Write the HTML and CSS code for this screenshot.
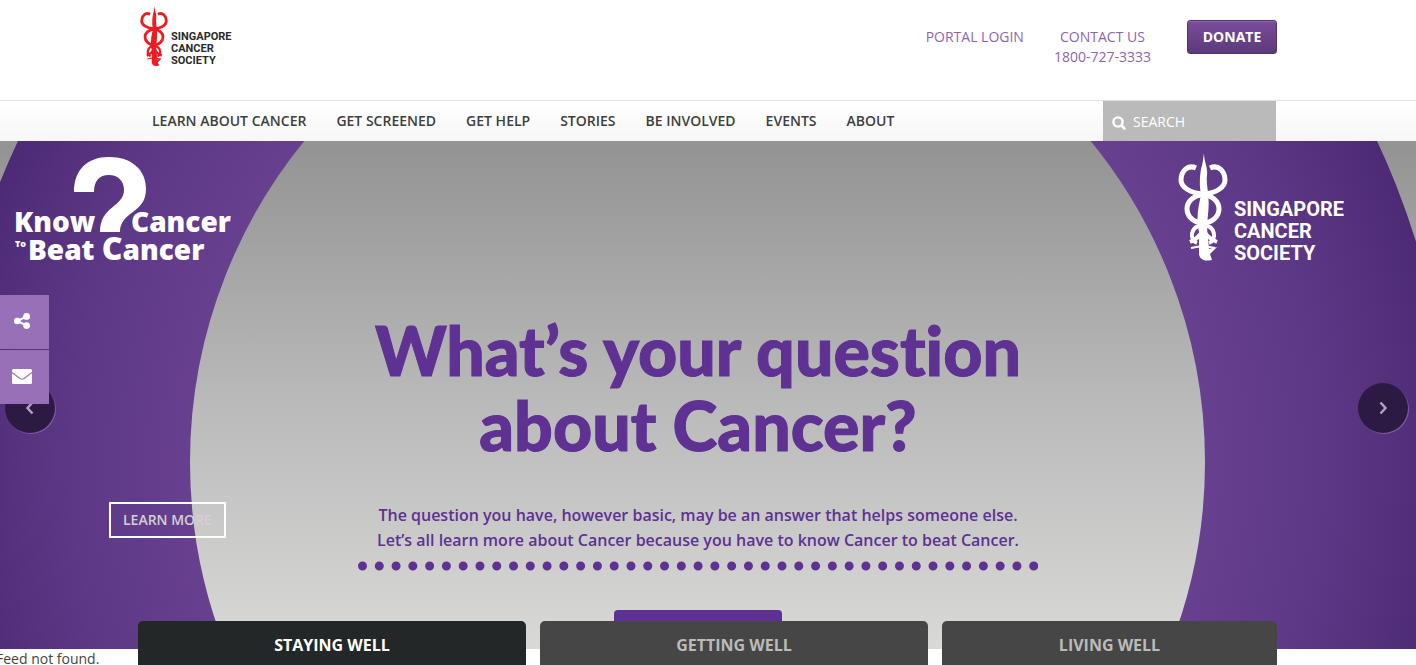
FILE: index.html
```
<!DOCTYPE html>
<html lang="en">
<head>
  <meta charset="utf-8">
  <title>Singapore Cancer Society</title>
  <link rel="stylesheet" href="styles.css">
</head>
<body>
  <svg width="0" height="0" class="symbols" aria-hidden="true">
    <symbol id="emblem" viewBox="0 0 50 110">
      <path d="M26 1C26 10 30 15 29 23C28 31 30 36 30 43C32 54 29 66 29 76L31 97L39 95L32 102L34 108C26 110 21 107 21 101V80C18 66 20 56 23 43C21 32 22 24 23 17C25 11 25 7 26 1Z" fill="currentColor"/>
      <g fill="none" stroke="currentColor" stroke-width="5">
        <path d="M18 16C9 12 3 20 3 28C3 35 12 41 25 42C39 41 47 35 47 28C47 20 41 12 32 16"/>
        <ellipse cx="25" cy="57" rx="16" ry="14"/>
        <path d="M19 91C11 88 12 74 25 73C38 74 39 88 31 91" stroke-width="4"/>
        <path d="M12 90C19 87 23 82 25 78C28 83 32 87 39 90" stroke-width="4"/>
        <path d="M13 96L24 94M37 96L26 94" stroke-width="2"/>
      </g>
    </symbol>
  </svg>

  <header class="header">
    <div class="container header-inner">
      <a href="#" class="logo">
        <svg class="logo-mark"><use href="#emblem"/></svg>
        <span>SINGAPORE<br>CANCER<br>SOCIETY</span>
      </a>
      <div class="header-links">
        <a href="#">PORTAL LOGIN</a>
        <a href="#" class="contact">CONTACT US<br>1800-727-3333</a>
        <button type="button" class="donate">DONATE</button>
      </div>
    </div>
  </header>

  <div class="navbar">
    <div class="container navbar-inner">
      <nav class="menu">
        <a href="#">LEARN ABOUT CANCER</a>
        <a href="#">GET SCREENED</a>
        <a href="#">GET HELP</a>
        <a href="#">STORIES</a>
        <a href="#">BE INVOLVED</a>
        <a href="#">EVENTS</a>
        <a href="#">ABOUT</a>
      </nav>
      <form class="search">
        <svg width="14" height="14" viewBox="0 0 14 14" aria-hidden="true">
          <circle cx="6" cy="6" r="4.6" fill="none" stroke="#fff" stroke-width="2.4"/>
          <path d="M9.5 9.5L12.5 12.5" stroke="#fff" stroke-width="2.6" stroke-linecap="round"/>
        </svg>
        <input type="text" placeholder="SEARCH" aria-label="Search">
      </form>
    </div>
  </div>

  <section class="hero">
    <svg class="hero-bg" viewBox="0 0 1416 508" preserveAspectRatio="xMidYMid slice" aria-hidden="true">
      <defs>
        <radialGradient id="ring" gradientUnits="userSpaceOnUse" cx="697.5" cy="321" r="752">
          <stop offset="0.67" stop-color="#67418f"/>
          <stop offset="0.83" stop-color="#5d3886"/>
          <stop offset="1" stop-color="#4d2a76"/>
        </radialGradient>
      </defs>
      <circle cx="697.5" cy="321" r="629.5" fill="none" stroke="url(#ring)" stroke-width="244"/>
    </svg>

    <svg class="campaign" viewBox="0 0 240 130" role="img" aria-label="Know Cancer To Beat Cancer">
      <path d="M74 51C74 29 87 16 109 16C132 16 146 29 146 48C146 73 120 70 120 91H100C100 65 124 66 124 49C124 40 118 34 109 34C99 34 94 40 94 51Z"/>
      <text x="14" y="91" class="word">Know</text>
      <text x="131" y="91" class="word">Cancer</text>
      <text x="15" y="106" class="word-small">To</text>
      <text x="28" y="119" class="word">Beat <tspan class="word-big">C</tspan>ancer</text>
    </svg>

    <div class="hero-logo">
      <svg class="hero-mark"><use href="#emblem"/></svg>
      <span>SINGAPORE<br>CANCER<br>SOCIETY</span>
    </div>

    <div class="banner">
      <h1>What’s your question<br>about Cancer?</h1>
      <p>The question you have, however basic, may be an answer that helps someone else.<br>Let’s all learn more about Cancer because you have to know Cancer to beat Cancer.</p>
      <svg class="dots" viewBox="0 0 680 10" aria-hidden="true">
        <path d="M4.500 5H692.500" pathLength="41" stroke-dasharray="0 1"/>
      </svg>
      <a href="#" class="ask" aria-label="Ask a question"></a>
    </div>

    <a href="#" class="learn-more">LEARN MORE</a>

    <button type="button" class="arrow arrow-prev" aria-label="Previous">
      <svg width="8" height="14" viewBox="0 0 8 14"><path d="M6.500 1.500L1.500 7L6.500 12.500"/></svg>
    </button>
    <button type="button" class="arrow arrow-next" aria-label="Next">
      <svg width="8" height="14" viewBox="0 0 8 14"><path d="M1.500 1.500L6.500 7L1.500 12.500"/></svg>
    </button>

    <div class="tabs">
      <button type="button" class="tab active">STAYING WELL</button>
      <button type="button" class="tab">GETTING WELL</button>
      <button type="button" class="tab tab-last">LIVING WELL</button>
    </div>
  </section>

  <div class="feed">Feed not found.</div>

  <div class="side-buttons">
    <button type="button" aria-label="Share">
      <svg width="16" height="16" viewBox="0 0 16 16">
        <circle cx="3.300" cy="8" r="3.300"/>
        <circle cx="12.600" cy="3.400" r="3.400"/>
        <circle cx="12.600" cy="12.600" r="3.400"/>
        <path d="M12.600 3.400L3.300 8L12.600 12.600" fill="none" stroke="#fff" stroke-width="2"/>
      </svg>
    </button>
    <button type="button" aria-label="Email">
      <svg width="20" height="16" viewBox="0 0 20 16">
        <rect y="1" width="20" height="15" rx="1.500"/>
        <path d="M0 4.500L8 10.400Q10 11.600 12 10.400L20 4.500" fill="none" stroke="#9870b8" stroke-width="1.200"/>
      </svg>
    </button>
  </div>
</body>
</html>
```
FILE: styles.css
```
body {
  margin: 0;
  font-family: 'Open Sans', sans-serif;
  font-size: 14px;
  line-height: 20px;
  color: #444;
  background-color: #fff;
  overflow: hidden;
}

a {
  text-decoration: none;
}

button {
  font-family: inherit;
  border: none;
  cursor: pointer;
}

.symbols {
  position: absolute;
}

.container {
  max-width: 1140px;
  margin: 0 auto;
}

/* Header */
.header {
  height: 100px;
  border-bottom: 1px solid #e2e2e2;
}

.header-inner {
  display: flex;
  justify-content: space-between;
  align-items: flex-start;
}

.logo {
  display: flex;
  align-items: flex-end;
  gap: 3px;
  padding: 5px 0 0 2px;
  font-family: Roboto, sans-serif;
  font-size: 11px;
  font-weight: 700;
  line-height: 12px;
  color: #2a2a2c;
}

.logo-mark {
  width: 28px;
  height: 62px;
  color: #ec1c24;
}

.header-links {
  display: flex;
  align-items: flex-start;
  padding-right: 1px;
}

.header-links a {
  margin-top: 27px;
  color: #9063b0;
  text-align: center;
}

.header-links .contact {
  margin-left: 30px;
  margin-right: 36px;
}

.donate {
  width: 90px;
  height: 34px;
  margin-top: 20px;
  padding: 0 0 2px;
  border: 1px solid #54346f;
  border-radius: 3px;
  background: linear-gradient(#7b4c9e, #5b3b78);
  box-shadow: inset 0 1px 0 #8f66ad;
  font-size: 14px;
  font-weight: 700;
  color: #fff;
}

/* Navigation */
.navbar {
  background: linear-gradient(#fff, #f7f7f7);
}

.navbar-inner {
  display: flex;
  justify-content: space-between;
}

.menu {
  display: flex;
  gap: 30px;
  padding-left: 14px;
}

.menu a {
  line-height: 40px;
  font-weight: 600;
  color: #3f3f3f;
}

.search {
  display: flex;
  align-items: center;
  gap: 7px;
  box-sizing: border-box;
  width: 173px;
  height: 40px;
  margin-right: 2px;
  padding: 4px 9px 0;
  background-color: #bababa;
}

.search input {
  flex: 1;
  min-width: 0;
  padding: 0 0 2px;
  border: none;
  background: none;
  font: inherit;
  color: #fff;
}

.search input::placeholder {
  color: #fff;
  opacity: 1;
}

/* Hero */
.hero {
  position: relative;
  background: linear-gradient(#939393, #bababa 52%, #d9d9d8);
}

.hero-bg {
  position: absolute;
  width: 100%;
  height: 100%;
}

.campaign {
  position: absolute;
  top: 0;
  left: 0;
  width: 240px;
  height: 130px;
  fill: #fff;
  font-family: 'Open Sans', sans-serif;
  font-weight: 800;
}

.word {
  font-size: 28px;
}

.word-big {
  font-size: 32px;
}

.word-small {
  font-size: 9px;
}

.hero-logo {
  position: absolute;
  top: 11px;
  right: 72px;
  display: flex;
  align-items: flex-end;
  gap: 6px;
  font-family: Roboto, sans-serif;
  font-size: 20px;
  font-weight: 700;
  line-height: 22px;
  color: #fff;
}

.hero-mark {
  width: 50px;
  height: 110px;
  margin-bottom: 2px;
}

.banner {
  position: relative;
  display: flex;
  flex-direction: column;
  align-items: center;
  padding: 171px 20px 0 0;
  text-align: center;
  color: #5e3192;
}

.banner h1 {
  margin: 0;
  font-family: Lato, sans-serif;
  font-size: 68px;
  font-weight: 900;
  line-height: 75px;
  font-variant-ligatures: none;
  -webkit-text-stroke: 1px #5e3192;
}

.banner p {
  margin: 41px 0 0;
  font-size: 16px;
  font-weight: 600;
  line-height: 25px;
}

.dots {
  width: 680px;
  height: 10px;
  margin-top: 8px;
}

.dots path {
  fill: none;
  stroke: #5e3192;
  stroke-width: 9;
  stroke-linecap: round;
}

.ask {
  width: 168px;
  height: 39px;
  margin-top: 39px;
  border-radius: 4px 4px 0 0;
  background-color: #5e3192;
}

.learn-more {
  position: absolute;
  top: 361px;
  left: 109px;
  padding: 6px 12px;
  border: 2px solid #fff;
  font-weight: 600;
  color: #d2d0d4;
}

.arrow {
  position: absolute;
  top: 242px;
  width: 50px;
  height: 50px;
  padding: 0 0 2px;
  border-radius: 50%;
  background-color: #2d1a42;
  box-shadow: 1px 1px 0 #7c5a9d;
}

.arrow svg {
  fill: none;
  stroke: #b49cc9;
  stroke-width: 2.5;
  vertical-align: middle;
}

.arrow-prev {
  left: 5px;
}

.arrow-next {
  right: 8px;
}

/* Tabs hang over the lower edge of the hero */
.tabs {
  position: absolute;
  left: 0;
  right: 0;
  bottom: -20px;
  display: flex;
  gap: 14px;
  box-sizing: border-box;
  max-width: 1140px;
  margin: 0 auto;
  padding-right: 1px;
}

.tab {
  width: 388px;
  height: 48px;
  padding: 0;
  border-radius: 5px 5px 0 0;
  background-color: #464646;
  font-size: 16px;
  font-weight: 700;
  color: #bbb;
}

.tab.active {
  background-color: #232728;
  color: #fff;
}

.tab-last {
  flex: 1;
}

.feed {
  margin-left: -4px;
}

/* Share buttons */
.side-buttons {
  position: fixed;
  top: 295px;
  left: 0;
  display: flex;
  flex-direction: column;
  gap: 1px;
}

.side-buttons button {
  width: 49px;
  height: 54px;
  padding: 0 5px 4px 0;
  background-color: #9870b8;
}

.side-buttons svg {
  fill: #fff;
  vertical-align: middle;
}
```
